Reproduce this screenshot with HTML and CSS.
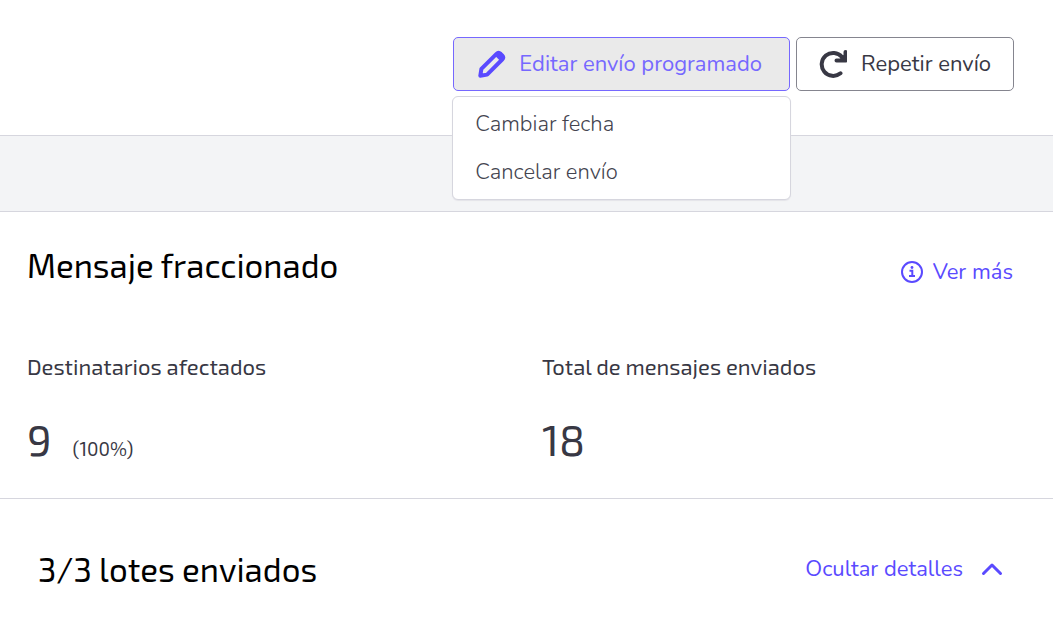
FILE: index.html
```
<!DOCTYPE html>
<html lang="es">
<head>
<meta charset="utf-8">
<meta name="viewport" content="width=device-width, initial-scale=1">
<title>Mensaje fraccionado</title>
<link rel="stylesheet" href="styles.css">
</head>
<body>
<header class="toolbar">
  <div class="dropdown">
    <button class="btn btn-active" type="button" aria-haspopup="menu" aria-expanded="true">
      <svg class="btn-icon" viewBox="0 0 28 28" fill="none" stroke="currentColor" stroke-width="4" stroke-linejoin="round" aria-hidden="true"><path d="M2.300 25.700 3.400 18.900 18.500 3.800Q20.500 1.800 22.600 3.800L24.200 5.400Q26.200 7.500 24.200 9.500L9.100 24.600Z"/><path d="M17.500 4.800 20.500 2.500 25.500 7.500 23.200 10.500Z" fill="currentColor" stroke-width="2"/></svg>
      <span>Editar envío programado</span>
    </button>
    <div class="menu" role="menu">
      <button class="menu-item" type="button" role="menuitem">Cambiar fecha</button>
      <button class="menu-item" type="button" role="menuitem">Cancelar envío</button>
    </div>
  </div>
  <button class="btn" type="button">
    <svg class="btn-icon" viewBox="0 0 28 28" fill="none" stroke="currentColor" stroke-width="4" stroke-linecap="round" stroke-linejoin="round" aria-hidden="true"><path d="M21.500 23.300A11.500 11.500 0 1 1 23 7"/><path d="M26.500 2V10.500H17.500"/><path d="M23 7 26.500 4V10H21Z" fill="currentColor" stroke-width="1"/></svg>
    <span>Repetir envío</span>
  </button>
</header>
<div class="band"></div>
<main>
  <section class="summary">
    <div class="section-head">
      <h2 class="title">Mensaje fraccionado</h2>
      <a class="link link-info" href="#">
        <svg class="info-icon" viewBox="0 0 22 22" fill="none" stroke="currentColor" stroke-width="2" aria-hidden="true"><circle cx="11" cy="11" r="10"/><path d="M8.500 9.800H11.300V15M8 15H14"/><circle cx="11" cy="6.500" r="1.400" fill="currentColor" stroke="none"/></svg>
        <span>Ver más</span>
      </a>
    </div>
    <dl class="stats">
      <div class="stat">
        <dt class="stat-label">Destinatarios afectados</dt>
        <dd class="stat-value"><span class="number">9</span><span class="percent">(100%)</span></dd>
      </div>
      <div class="stat">
        <dt class="stat-label">Total de mensajes enviados</dt>
        <dd class="stat-value"><span class="number">18</span></dd>
      </div>
    </dl>
  </section>
  <section class="batches">
    <h2 class="title">3/3 lotes enviados</h2>
    <button class="link link-toggle" type="button" aria-expanded="true">
      <span>Ocultar detalles</span>
      <svg class="chevron" viewBox="0 0 22 22" fill="none" stroke="currentColor" stroke-width="3" stroke-linecap="round" stroke-linejoin="round" aria-hidden="true"><path d="M2.500 15.500 11 7 19.500 15.500"/></svg>
    </button>
  </section>
</main>
</body>
</html>
```

FILE: styles.css
```
:root {
  --ink: #383844;
  --accent: #5a4aff;
  --accent-soft: #7668ff;
  --line: #d6d6de;
  --ui: Nunito, "Noto Sans", sans-serif;
  --display: "Exo 2", "Noto Sans", sans-serif;
}

* {
  box-sizing: border-box;
}

body {
  margin: 0;
  background: #fff;
  color: var(--ink);
  font-family: var(--ui);
  font-size: 22px;
  line-height: 32px;
}

button {
  font: inherit;
  cursor: pointer;
}

.toolbar {
  display: flex;
  justify-content: flex-end;
  gap: 6px;
  padding: 37px 39px 44px;
}

.dropdown {
  position: relative;
}

.btn {
  display: flex;
  align-items: center;
  gap: 14px;
  padding: 10px 22px;
  border: 1px solid #85858f;
  border-radius: 5px;
  background: #fff;
  color: var(--ink);
}

.btn-active {
  gap: 13px;
  border-color: var(--accent-soft);
  background: #eaeaea;
  color: var(--accent-soft);
  padding: 10px 27px 10px 24px;
}

.btn-icon {
  width: 28px;
  height: 28px;
}

.btn-active .btn-icon {
  color: var(--accent);
}

.menu {
  position: absolute;
  top: calc(100% + 5px);
  left: -1px;
  right: -1px;
  padding: 3px 0;
  border: 1px solid var(--line);
  border-radius: 6px;
  background: #fff;
  box-shadow: 0 1px 1px #e4e4e9;
}

.menu-item {
  display: block;
  width: 100%;
  padding: 8px 22px;
  border: 0;
  background: none;
  color: #44444f;
  font-weight: 300;
  text-align: left;
}

.band {
  height: 77px;
  border: 1px solid var(--line);
  border-width: 1px 0;
  background: #f3f4f6;
}

.summary {
  padding: 29px 40px 31px 27px;
  border-bottom: 1px solid var(--line);
}

.section-head,
.batches {
  display: flex;
  align-items: center;
  justify-content: space-between;
}

.title {
  margin: 0;
  color: #000;
  font: 400 33px/48px var(--display);
}

.link {
  display: flex;
  align-items: center;
  padding: 0;
  border: 0;
  background: none;
  color: var(--accent);
  text-decoration: none;
}

.link-info {
  gap: 10px;
  padding-top: 14px;
}

.info-icon,
.chevron {
  width: 22px;
  height: 22px;
}

.link-toggle {
  gap: 18px;
}

.stats {
  display: grid;
  grid-template-columns: 1fr 1fr;
  gap: 44px;
  margin: 61px 0 0;
  font-family: var(--display);
}

.stat-label {
  font-size: 22px;
}

.stat-value {
  display: flex;
  align-items: baseline;
  gap: 21px;
  margin: 29px 0 0;
}

.number {
  font-size: 43px;
  line-height: 56px;
}

.percent {
  font-size: 19px;
}

.batches {
  padding: 46px 50px 32px 38px;
}
```
